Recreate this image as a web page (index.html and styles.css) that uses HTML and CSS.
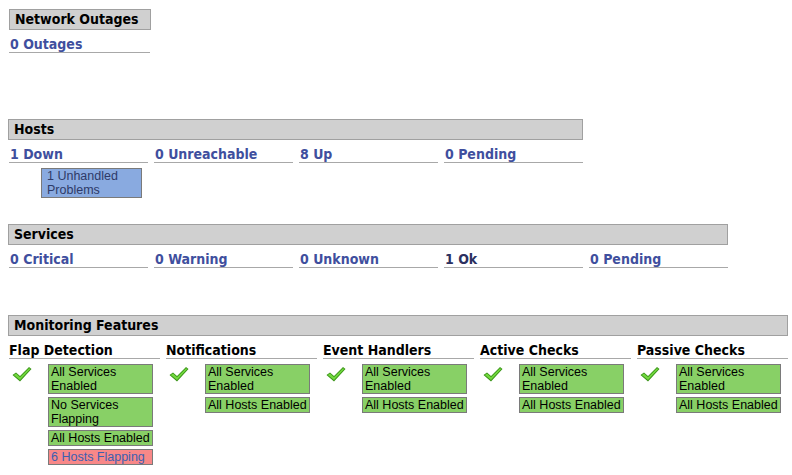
FILE: index.html
```html
<!DOCTYPE html>
<html>
<head>
<meta charset="utf-8">
<link rel="stylesheet" href="styles.css">
</head>
<body>
<section class="block outages">
  <div class="hdr">Network Outages</div>
  <div class="cells">
    <div class="cell"><a class="lnk">0 Outages</a></div>
  </div>
</section>

<section class="block hosts">
  <div class="hdr">Hosts</div>
  <div class="cells">
    <div class="cell">
      <a class="lnk">1 Down</a>
      <div class="sub"><span class="tag blue">1 Unhandled<br>Problems</span></div>
    </div>
    <div class="cell"><a class="lnk">0 Unreachable</a></div>
    <div class="cell"><a class="lnk">8 Up</a></div>
    <div class="cell"><a class="lnk">0 Pending</a></div>
  </div>
</section>

<section class="block services">
  <div class="hdr">Services</div>
  <div class="cells">
    <div class="cell"><a class="lnk">0 Critical</a></div>
    <div class="cell"><a class="lnk">0 Warning</a></div>
    <div class="cell"><a class="lnk">0 Unknown</a></div>
    <div class="cell"><a class="lnk dark">1 Ok</a></div>
    <div class="cell"><a class="lnk">0 Pending</a></div>
  </div>
</section>

<section class="block features">
  <div class="hdr">Monitoring Features</div>
  <div class="fcols">
    <div class="fcol">
      <div class="ftitle">Flap Detection</div>
      <div class="fbody">
        <svg class="check" viewBox="0 0 20 17"><path d="M0.5 9 L4 6.5 L8 10 L17 1 L19.5 3 L8 15.5 Z" fill="#3a9418"/><path d="M1.8 9 L4 7.6 L8 11.2 L17 2.2 L18.3 3.1 L8 14 Z" fill="#72d83e"/></svg>
        <div class="tags">
          <span class="tag green">All Services<br>Enabled</span>
          <span class="tag green">No Services<br>Flapping</span>
          <span class="tag green">All Hosts Enabled</span>
          <span class="tag red">6 Hosts Flapping</span>
        </div>
      </div>
    </div>
    <div class="fcol">
      <div class="ftitle">Notifications</div>
      <div class="fbody">
        <svg class="check" viewBox="0 0 20 17"><path d="M0.5 9 L4 6.5 L8 10 L17 1 L19.5 3 L8 15.5 Z" fill="#3a9418"/><path d="M1.8 9 L4 7.6 L8 11.2 L17 2.2 L18.3 3.1 L8 14 Z" fill="#72d83e"/></svg>
        <div class="tags">
          <span class="tag green">All Services<br>Enabled</span>
          <span class="tag green">All Hosts Enabled</span>
        </div>
      </div>
    </div>
    <div class="fcol">
      <div class="ftitle">Event Handlers</div>
      <div class="fbody">
        <svg class="check" viewBox="0 0 20 17"><path d="M0.5 9 L4 6.5 L8 10 L17 1 L19.5 3 L8 15.5 Z" fill="#3a9418"/><path d="M1.8 9 L4 7.6 L8 11.2 L17 2.2 L18.3 3.1 L8 14 Z" fill="#72d83e"/></svg>
        <div class="tags">
          <span class="tag green">All Services<br>Enabled</span>
          <span class="tag green">All Hosts Enabled</span>
        </div>
      </div>
    </div>
    <div class="fcol">
      <div class="ftitle">Active Checks</div>
      <div class="fbody">
        <svg class="check" viewBox="0 0 20 17"><path d="M0.5 9 L4 6.5 L8 10 L17 1 L19.5 3 L8 15.5 Z" fill="#3a9418"/><path d="M1.8 9 L4 7.6 L8 11.2 L17 2.2 L18.3 3.1 L8 14 Z" fill="#72d83e"/></svg>
        <div class="tags">
          <span class="tag green">All Services<br>Enabled</span>
          <span class="tag green">All Hosts Enabled</span>
        </div>
      </div>
    </div>
    <div class="fcol">
      <div class="ftitle">Passive Checks</div>
      <div class="fbody">
        <svg class="check" viewBox="0 0 20 17"><path d="M0.5 9 L4 6.5 L8 10 L17 1 L19.5 3 L8 15.5 Z" fill="#3a9418"/><path d="M1.8 9 L4 7.6 L8 11.2 L17 2.2 L18.3 3.1 L8 14 Z" fill="#72d83e"/></svg>
        <div class="tags">
          <span class="tag green">All Services<br>Enabled</span>
          <span class="tag green">All Hosts Enabled</span>
        </div>
      </div>
    </div>
  </div>
</section>
</body>
</html>
```

FILE: styles.css
```css
html, body { margin: 0; padding: 0; background: #fff; }
body {
  padding: 9px 8px 0 8px;
  font-family: "DejaVu Sans Condensed", "DejaVu Sans", sans-serif;
  font-stretch: condensed;
  color: #000;
}
.block { display: block; }
.hdr {
  box-sizing: border-box;
  height: 21px;
  line-height: 19px;
  background: #d0d0d0;
  border: 1px solid #a0a0a0;
  padding-left: 5px;
  font-weight: bold;
  font-size: 14px;
}
.cells { display: flex; gap: 6px; margin-top: 6px; }
.cell { width: 139px; flex: none; }
.lnk {
  display: block;
  font-weight: bold;
  font-size: 14px;
  line-height: 16px;
  color: #3f4f9e;
  border-bottom: 1px solid #a8a8a8;
  padding-left: 1px;
  text-decoration: none;
}
.lnk.dark { color: #2b3060; }
.outages { width: 142px; margin-left: 1px; }
.outages .cell { width: 141px; }
.hosts { width: 575px; margin-top: 66px; }
.hosts .cells { margin-left: 1px; }
.services { width: 720px; margin-top: 26px; }
.services .cells { margin-left: 1px; }
.features { width: 780px; margin-top: 47px; }
.sub { padding: 5px 0 0 32px; }
.tag {
  display: block;
  box-sizing: border-box;
  border: 1px solid #7a7a7a;
  font-family: "Liberation Sans", Arial, sans-serif;
  font-stretch: normal;
  font-size: 12.5px;
  line-height: 14px;
  padding: 0 0 0 2px;
  white-space: nowrap;
  overflow: hidden;
  color: #000;
}
.tag.blue {
  width: 101px;
  background: #89aae0;
  color: #2e3a68;
  padding-left: 5px;
}
.fcols { display: flex; gap: 6px; margin-top: 6px; margin-left: 1px; }
.fcol { width: 151px; flex: none; }
.ftitle {
  font-weight: bold;
  font-size: 14px;
  line-height: 16px;
  border-bottom: 1px solid #a8a8a8;
}
.fbody { display: flex; padding-top: 5px; }
.check { width: 20px; height: 17px; margin: 2px 0 0 3px; flex: none; }
.tags { display: flex; flex-direction: column; gap: 3px; margin-left: 16px; width: 105px; }
.tag.green { background: #88d066; }
.tag.red { background: #f88888; color: #3d5fb0; }
```
